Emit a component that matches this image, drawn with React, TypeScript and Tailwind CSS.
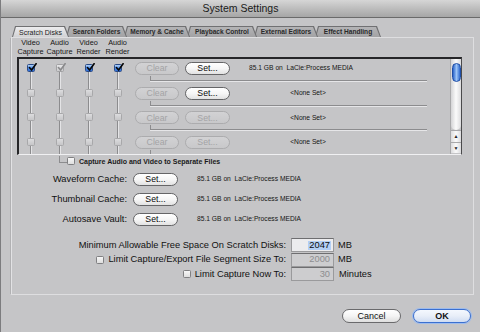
import React from 'react';

type BoxKind = 'on' | 'dimOn' | 'dim' | 'off';

const boxLook: Record<BoxKind, string> = {
  on: 'border-[#2a4a86] bg-gradient-to-b from-[#b3d3f8] via-[#4f8de6] to-[#2f6cd4]',
  dimOn: 'border-[#a2a2a4] bg-gradient-to-b from-[#e6e6e8] to-[#cbcbcd]',
  dim: 'border-[#a8a8aa] bg-gradient-to-b from-[#dcdcde] to-[#c6c6c8]',
  off: 'border-[#808082] bg-gradient-to-b from-[#f7f7f7] to-[#dedede]',
};

const Check = ({ color }: { color: string }) => (
  <svg viewBox="0 0 10 10" className="absolute -top-[2px] left-0 w-[9px] h-[9px]">
    <path d="M1.6 5 L4 7.8 L9 0.8" fill="none" stroke={color} strokeWidth="1.8" strokeLinecap="round" strokeLinejoin="round" />
  </svg>
);

const Box = ({ kind }: { kind: BoxKind }) => (
  <div className={`relative w-[8px] h-[8px] shrink-0 rounded-[1.5px] border ${boxLook[kind]}`}>
    {kind === 'on' && <Check color="#050505" />}
    {kind === 'dimOn' && <Check color="#8a8a8c" />}
  </div>
);

const Pill = ({ label, enabled, w }: { label: string; enabled: boolean; w: string }) => (
  <div
    className={`flex items-center justify-center h-[13px] shrink-0 rounded-full border text-[8.7px] leading-none ${w} ${
      enabled
        ? 'border-[#656567] bg-gradient-to-b from-white via-[#f6f6f6] to-[#e2e2e2] text-[#0a0a0a]'
        : 'border-[#acacae] bg-gradient-to-b from-[#d2d2d4] to-[#c8c8ca] text-[#a3a3a5]'
    }`}
  >
    {label}
  </div>
);

const rows = [
  { boxes: ['on', 'dimOn', 'on', 'on'] as BoxKind[], set: true, text: '85.1 GB on  LaCie:Process MEDIA', none: false },
  { boxes: ['dim', 'dim', 'dim', 'dim'] as BoxKind[], set: true, text: '<None Set>', none: true },
  { boxes: ['dim', 'dim', 'dim', 'dim'] as BoxKind[], set: false, text: '<None Set>', none: true },
  { boxes: ['dim', 'dim', 'dim', 'dim'] as BoxKind[], set: false, text: '<None Set>', none: true },
];

const tabs = [
  { label: 'Scratch Disks', w: 'w-[57px]', z: 'z-[7]', active: true },
  { label: 'Search Folders', w: 'w-[61px]', z: 'z-[6]', active: false },
  { label: 'Memory & Cache', w: 'w-[66px]', z: 'z-[5]', active: false },
  { label: 'Playback Control', w: 'w-[70px]', z: 'z-[4]', active: false },
  { label: 'External Editors', w: 'w-[64px]', z: 'z-[3]', active: false },
  { label: 'Effect Handling', w: 'w-[66px]', z: 'z-[2]', active: false },
];

const headers = [
  ['Video', 'Capture'],
  ['Audio', 'Capture'],
  ['Video', 'Render'],
  ['Audio', 'Render'],
];

const caches = ['Waveform Cache:', 'Thumbnail Cache:', 'Autosave Vault:'];

const Field = ({ value, enabled, selected }: { value: string; enabled: boolean; selected?: boolean }) => (
  <div
    className={`flex items-center justify-end w-[43px] h-[14px] shrink-0 border border-[#9a9a9c] border-t-[#6e6e70] pr-[2px] text-[9.3px] leading-none ${
      enabled ? 'bg-[#ececee] text-[#0a0a0a]' : 'bg-[#cdcdcf] text-[#8e8e90]'
    }`}
  >
    <span className={selected ? 'bg-[#b3cff5] px-[1px]' : 'px-[1px]'}>{value}</span>
  </div>
);

export default function App() {
  return (
    <div className="w-[480px] h-[332px] overflow-hidden bg-[#c5c5c7] border-l border-[#7c7c7e] font-['Liberation_Sans',Arial,sans-serif] text-[#111]">
      {/* title bar */}
      <div className="h-[18px] flex items-center justify-center bg-gradient-to-b from-[#d6d6d6] via-[#bdbdbd] to-[#a6a6a6] border-b border-[#6a6a6a] text-[10.5px] text-[#1a1a1a]">
        System Settings
      </div>

      {/* tabs */}
      <div className="flex mt-[8px] ml-[11px] h-[11px]">
        {tabs.map((t, i) => (
          <div
            key={t.label}
            className={`relative ${t.z} ${t.w} ${i > 0 ? '-ml-[3px]' : ''} h-[11px] px-[1px] pt-[1px] bg-[#707072] [clip-path:polygon(0_100%,3px_0,calc(100%-4px)_0,100%_100%)]`}
          >
            <div
              className={`h-full flex items-center justify-center pl-[3px] pr-[3px] whitespace-nowrap leading-none [clip-path:polygon(0_100%,3px_0,calc(100%-4px)_0,100%_100%)] ${
                t.active
                  ? 'bg-gradient-to-b from-[#ececee] to-[#d2d2d4] text-[7px] text-[#222]'
                  : 'bg-gradient-to-b from-[#b4b4b6] to-[#a2a2a4] text-[6.6px] font-bold text-[#2a2a2a]'
              }`}
            >
              {t.label}
            </div>
          </div>
        ))}
      </div>

      {/* panel */}
      <div className="ml-[9px] w-[464px] h-[258px] border border-[#dedee0] border-l-[#b1b1b3] shadow-[inset_1px_0_0_#e2e2e4] flex flex-col">
        <div className="flex gap-[20px] pl-[15px] h-[18px]">
          {headers.map((h, i) => (
            <div key={i} className="w-[9px] flex justify-center">
              <div className="text-center whitespace-nowrap text-[7.3px] leading-[9px] text-[#161616]">
                <div>{h[0]}</div>
                <div>{h[1]}</div>
              </div>
            </div>
          ))}
        </div>

        {/* disk list */}
        <div className="mt-[1px] ml-[6px] w-[445px] h-[98px] shrink-0 flex overflow-hidden border-t-2 border-l-2 border-[#262628] border-r border-r-[#4a4a4c] border-b border-b-[#f0f0f2]">
          <div className="flex-1 flex flex-col">
            {rows.map((r, i) => (
              <div key={i} className="flex h-[24.7px] shrink-0">
                <div className="flex gap-[20px] pl-[7px]">
                  {r.boxes.map((b, j) => (
                    <div key={j} className="flex flex-col items-center w-[9px]">
                      <div className={`w-px h-[5px] ${i === 0 ? '' : 'bg-[#8c8c8e] shadow-[1px_0_0_#e4e4e6]'}`} />
                      <Box kind={b} />
                      <div className="w-px flex-1 bg-[#8c8c8e] shadow-[1px_0_0_#e4e4e6]" />
                    </div>
                  ))}
                </div>
                <div className="flex flex-col pl-[13px] pt-[3px]">
                  <div className="flex items-center h-[13px]">
                    <Pill label="Clear" enabled={false} w="w-[44px]" />
                    <div className="ml-[6px]">
                      <Pill label="Set..." enabled={r.set} w="w-[45px]" />
                    </div>
                    <div
                      className={`ml-[19px] w-[118px] whitespace-pre text-[6.7px] leading-none text-[#151515] ${
                        r.none ? 'text-center' : 'text-left'
                      }`}
                    >
                      {r.text}
                    </div>
                  </div>
                  <div className="flex mt-[1px] ml-[15px]">
                    <div className="w-px h-[4px] bg-[#8c8c8e]" />
                  </div>
                  <div className="ml-[15px] w-[277px] h-[2px] border-t border-[#8c8c8e] border-b border-b-[#e6e6e8]" />
                </div>
              </div>
            ))}
          </div>

          {/* scrollbar */}
          <div className="w-[11px] shrink-0 flex flex-col border-l border-[#a9a9ab]">
            <div className="h-[71px] shrink-0 rounded-b-[5px] bg-gradient-to-r from-[#d4d4d6] via-[#fbfbfb] to-[#dcdcde] pt-[4px] flex justify-center">
              <div className="w-[9px] h-[19px] rounded-full border border-[#1f4ea6] bg-gradient-to-r from-[#2b63c9] via-[#9cc4f7] to-[#2f68cc]" />
            </div>
            <div className="h-[12px] shrink-0 flex items-center justify-center bg-gradient-to-r from-[#dcdcde] via-[#fafafa] to-[#dcdcde] border-t border-[#a8a8aa] text-[5px] leading-none text-[#222]">
              ▲
            </div>
            <div className="h-[11px] shrink-0 flex items-center justify-center bg-gradient-to-r from-[#dcdcde] via-[#fafafa] to-[#dcdcde] border-t border-[#a8a8aa] text-[5px] leading-none text-[#222]">
              ▼
            </div>
          </div>
        </div>

        {/* separate files */}
        <div className="flex items-center h-[10px] mt-[1px] pl-[48px]">
          <div className="self-start w-[8px] h-[7px] border-l border-b border-[#8c8c8e]" />
          <Box kind="off" />
          <div className="ml-[4px] text-[7px] font-bold leading-none text-[#1a1a1a] whitespace-nowrap">
            Capture Audio and Video to Separate Files
          </div>
        </div>

        {/* caches */}
        <div className="mt-[3.5px] flex flex-col">
          {caches.map((c) => (
            <div key={c} className="flex items-center h-[20px]">
              <div className="w-[116px] text-right text-[9.3px] leading-none">{c}</div>
              <div className="ml-[6px]">
                <Pill label="Set..." enabled w="w-[45px]" />
              </div>
              <div className="ml-[19px] whitespace-pre text-[6.7px] leading-none text-[#151515]">
                85.1 GB on  LaCie:Process MEDIA
              </div>
            </div>
          ))}
        </div>

        {/* limits */}
        <div className="mt-[8.5px] flex flex-col text-[9.3px] leading-none">
          <div className="flex items-center h-[14.5px]">
            <div className="w-[275px] text-right">Minimum Allowable Free Space On Scratch Disks:</div>
            <div className="ml-[5px]">
              <Field value="2047" enabled selected />
            </div>
            <div className="ml-[4px]">MB</div>
          </div>
          <div className="flex items-center h-[14.5px]">
            <div className="w-[275px] flex items-center justify-end gap-[4px]">
              <Box kind="off" />
              <span>Limit Capture/Export File Segment Size To:</span>
            </div>
            <div className="ml-[5px]">
              <Field value="2000" enabled={false} />
            </div>
            <div className="ml-[4px]">MB</div>
          </div>
          <div className="flex items-center h-[14.5px]">
            <div className="w-[275px] flex items-center justify-end gap-[4px]">
              <Box kind="off" />
              <span>Limit Capture Now To:</span>
            </div>
            <div className="ml-[5px]">
              <Field value="30" enabled={false} />
            </div>
            <div className="ml-[5px]">Minutes</div>
          </div>
        </div>
      </div>

      {/* dialog buttons */}
      <div className="flex justify-end gap-[12px] pr-[9px] mt-[14px]">
        <div className="w-[59px] h-[14px] rounded-full border border-[#6a6a6c] bg-gradient-to-b from-white via-[#f4f4f4] to-[#dedede] flex items-center justify-center text-[9px] leading-none">
          Cancel
        </div>
        <div className="w-[58px] h-[14px] rounded-full border border-[#3a6fd0] bg-gradient-to-b from-[#f4f8fe] via-[#e8eef8] to-[#cfdcf2] shadow-[0_0_0_1px_#9dbbec] flex items-center justify-center text-[9px] font-bold leading-none">
          OK
        </div>
      </div>
    </div>
  );
}
